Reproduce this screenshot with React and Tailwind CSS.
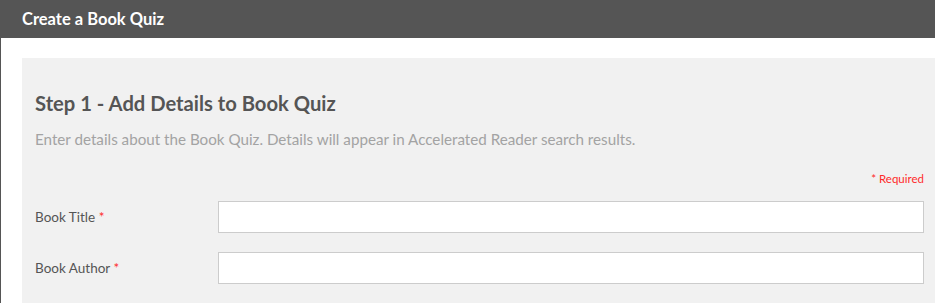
const fields = ["Book Title", "Book Author"];

const App = () => {
  return (
    <div className="min-h-[303px] bg-white font-['Lato','Open_Sans',sans-serif]">
      <div className="h-[38px] bg-[#555555] px-[22px] flex items-center">
        <h1 className="text-[16.5px] font-bold text-white">Create a Book Quiz</h1>
      </div>
      <div className="border-l border-[#555555] pt-[20px] pl-[21px]">
        <div className="bg-[#f1f1f1] pt-[33px] pl-[13px] pr-[11px] pb-6">
          <h2 className="text-[20.2px] leading-[24px] font-bold text-[#555555]">
            Step 1 - Add Details to Book Quiz
          </h2>
          <p className="mt-[14px] text-[15.2px] leading-[20px] text-[#a3a3a3]">
            Enter details about the Book Quiz. Details will appear in Accelerated Reader search results.
          </p>
          <div className="mt-[22px] text-right text-[11.5px] leading-[16px] text-[#ff2a2a]">
            * Required
          </div>
          <div className="mt-[14px] flex flex-col gap-[19px]">
            {fields.map((label) => (
              <div key={label} className="flex items-center">
                <label className="w-[183px] shrink-0 text-[13.5px] text-[#555555]">
                  {label} <span className="text-[#ff2a2a]">*</span>
                </label>
                <input
                  type="text"
                  className="h-[32px] flex-1 border border-[#cccccc] bg-white px-2 outline-none"
                />
              </div>
            ))}
            <div className="flex items-center">
              <div className="w-[183px] shrink-0" />
              <input
                type="text"
                className="h-[32px] flex-1 border border-[#cccccc] bg-white px-2 outline-none"
              />
            </div>
          </div>
        </div>
      </div>
    </div>
  );
};

export default App;
